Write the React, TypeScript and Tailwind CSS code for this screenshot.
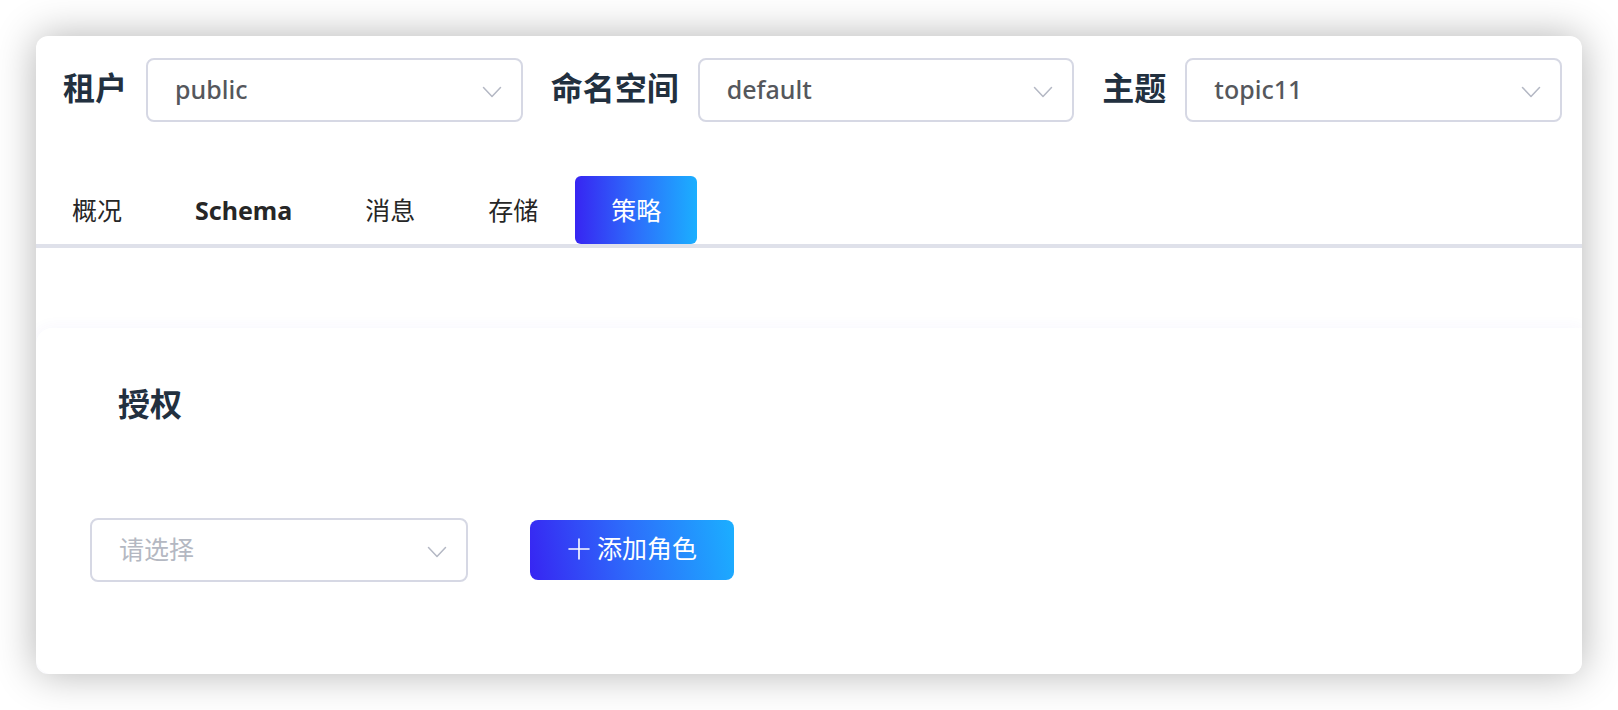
import { useId, useState } from "react";

type SelectBoxProps = {
  id: string;
  options: string[];
  placeholder?: string;
  ariaLabel?: string;
};

function SelectBox({ id, options, placeholder, ariaLabel }: SelectBoxProps) {
  const [value, setValue] = useState(placeholder ? "" : options[0]);
  const tone = value === "" ? "font-normal text-[#b4b8c2]" : "font-medium text-[#55575c]";

  return (
    <div className="grid w-0 flex-1 items-center">
      <select
        id={id}
        aria-label={ariaLabel}
        value={value}
        onChange={(e) => setValue(e.target.value)}
        className={`col-start-1 row-start-1 h-16 w-full appearance-none rounded-lg border-2 border-[#d6d8e4] bg-white pr-14 pl-[27px] text-[25px] ${tone}`}
      >
        {placeholder && <option value="">{placeholder}</option>}
        {options.map((option) => (
          <option key={option} value={option}>
            {option}
          </option>
        ))}
      </select>
      <svg
        viewBox="0 0 20 12"
        className="pointer-events-none col-start-1 row-start-1 mt-1 mr-[21px] h-3 w-5 justify-self-end"
        fill="none"
        stroke="#b4b8c4"
        strokeWidth="1.5"
        strokeLinecap="round"
        strokeLinejoin="round"
        aria-hidden="true"
      >
        <path d="M1.5 1.5 10 10.5 18.5 1.5" />
      </svg>
    </div>
  );
}

function Field({ label, options }: { label: string; options: string[] }) {
  const id = useId();
  return (
    <div className="flex flex-auto items-center gap-[19px]">
      <label htmlFor={id} className="shrink-0 pb-1 text-[32px] leading-10 font-bold text-[#22303f]">
        {label}
      </label>
      <SelectBox id={id} options={options} />
    </div>
  );
}

const tabs = ["概况", "Schema", "消息", "存储", "策略"];

function Tabs() {
  const [active, setActive] = useState("策略");
  return (
    <div role="tablist" className="mt-[54px] flex gap-px border-b-4 border-[#dfe1ea]">
      {tabs.map((tab) => {
        const look =
          tab === active
            ? "bg-[linear-gradient(90deg,#3725f2,#2d6efb,#1bafff)] text-white"
            : "text-[#262626]";
        const weight = tab === "Schema" ? "font-bold" : "font-normal";
        return (
          <button
            key={tab}
            type="button"
            role="tab"
            aria-selected={tab === active}
            onClick={() => setActive(tab)}
            className={`h-[68px] rounded-md px-9 pt-[2px] text-[25px] ${weight} ${look}`}
          >
            {tab}
          </button>
        );
      })}
    </div>
  );
}

export default function App() {
  return (
    <div className="bg-white p-9 font-['Noto_Sans','Noto_Sans_CJK_SC',sans-serif]">
      <main className="overflow-hidden rounded-xl bg-white shadow-[0_0_40px_rgba(0,0,0,0.3)]">
        <div className="flex gap-7 pt-[22px] pr-5 pl-[27px]">
          <Field label="租户" options={["public"]} />
          <Field label="命名空间" options={["default"]} />
          <Field label="主题" options={["topic11"]} />
        </div>

        <Tabs />

        <section className="mt-20 rounded-l-2xl bg-white pt-14 pb-[92px] shadow-[0_0_16px_rgba(70,60,220,0.05)]">
          <h2 className="pl-[82px] text-[32px] leading-10 font-bold text-[#22303f]">授权</h2>
          <div className="mt-[94px] flex items-center gap-[62px] pl-[54px]">
            <div className="flex w-[378px]">
              <SelectBox id="role" ariaLabel="角色" placeholder="请选择" options={["admin"]} />
            </div>
            <button
              type="button"
              className="flex h-[60px] items-center gap-[6px] rounded-lg bg-[linear-gradient(80deg,#3725f2,#2d6efb,#1bafff)] px-[37px] pb-[2px] text-[25px] text-white"
            >
              <svg
                viewBox="0 0 24 24"
                className="h-6 w-6"
                fill="none"
                stroke="currentColor"
                strokeWidth="1.6"
                strokeLinecap="round"
                aria-hidden="true"
              >
                <path d="M12 2v20M2 12h20" />
              </svg>
              添加角色
            </button>
          </div>
        </section>
      </main>
    </div>
  );
}
